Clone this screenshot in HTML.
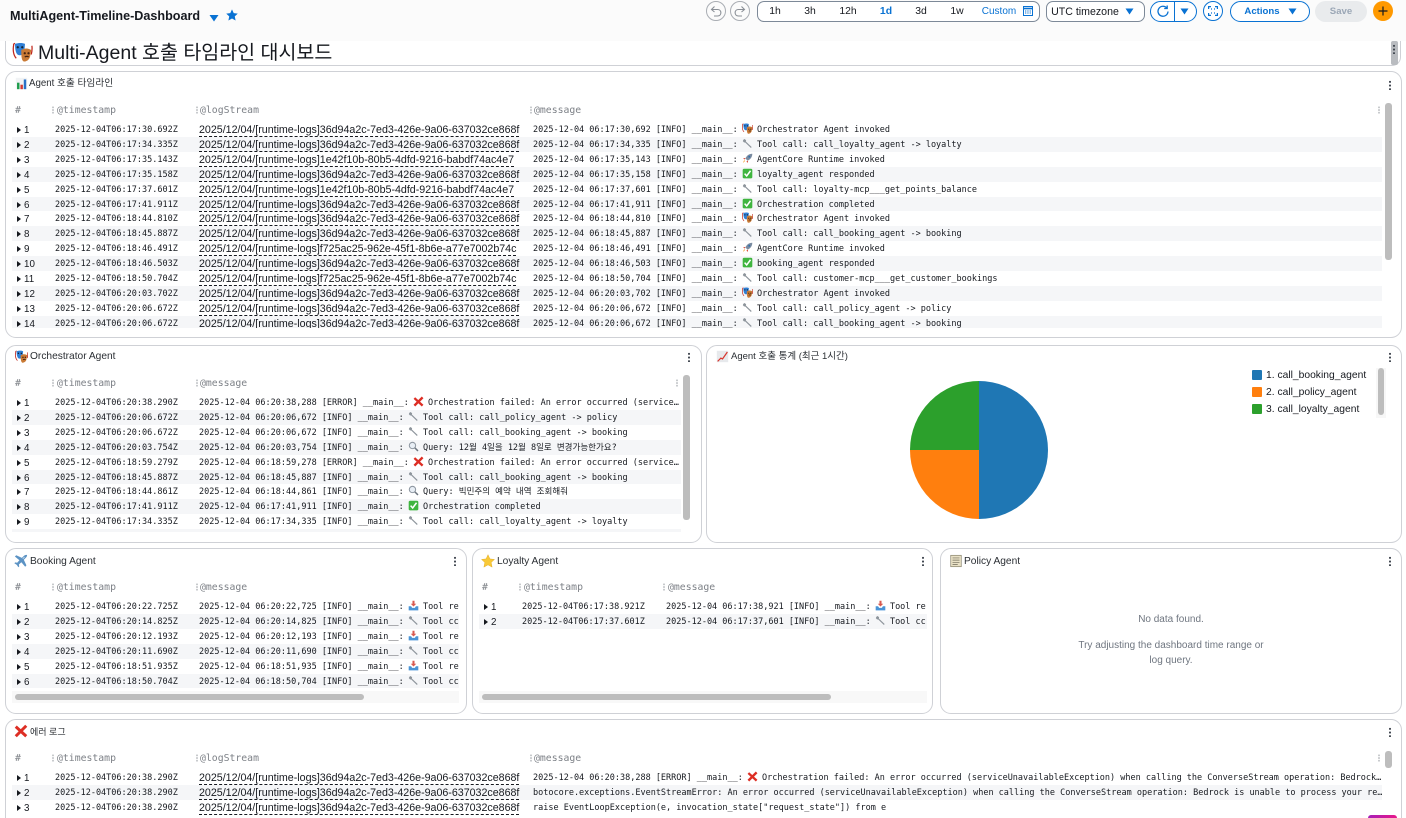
<!DOCTYPE html>
<html lang="ko">
<head>
<meta charset="utf-8">
<title>MultiAgent-Timeline-Dashboard</title>
<style>
html,body{margin:0;padding:0;background:#fff;width:1406px;height:818px;overflow:hidden}
#page{position:relative;width:1406px;height:818px;overflow:hidden;font-family:"Liberation Sans","Noto Sans CJK KR",sans-serif;color:#16191f}
.abs,.panel,.tb,.pt,.th,.sb,.dots{position:absolute}
#top{position:absolute;left:0;top:0;width:1406px;height:41px;background:#fbfbfb}
.panel{box-sizing:border-box;border:1px solid #cfd1d6;border-radius:11px;background:#fff}
.pt{font-size:10.2px;line-height:12px;color:#2a2e33;white-space:nowrap}
.pi{position:absolute;width:13px;height:13px}
.th{font:9.8px/12px "DejaVu Sans Mono",monospace;color:#7d8187;white-space:nowrap}
.sep{position:absolute;width:2px;height:8px;background-image:radial-gradient(circle,#9a9ea3 .7px,transparent .8px);background-size:2px 2.7px}
.sb{background:#bdbdbd;border-radius:3px}
.dots{width:2px;height:10px;background-image:radial-gradient(circle,#414750 1px,transparent 1.1px);background-size:2px 3.7px}
.tb{overflow:hidden}
.r{position:relative;height:14.92px;font:8.5px/14.92px "DejaVu Sans Mono","Noto Sans CJK KR",monospace;color:#16191f;white-space:nowrap}
.r:nth-child(even){background:#f5f6f8}
.r i{position:absolute;left:5px;top:5px;width:0;height:0;border-left:4px solid #16191f;border-top:3.2px solid transparent;border-bottom:3.2px solid transparent}
.r b{position:absolute;left:12px;top:1px;font:400 9.8px/15px "Liberation Sans",sans-serif}
.r .t{position:absolute;left:43px;top:1px}
.r .l{position:absolute;left:187px;top:0;font:400 10.68px/16px "Liberation Sans",sans-serif;border-bottom:1px dashed #16191f;height:14px;letter-spacing:-.01px}
.r .m{position:absolute;top:1px;overflow:hidden}
.m2{left:187px}.m3{left:521px}
.r svg{width:11px;height:11px;vertical-align:-2px;margin:0 -1px 0 -1px}
.ti{position:absolute;top:6px;font-size:10.4px;line-height:12px;white-space:nowrap;transform:translateX(-50%);color:#16191f}
.circ{position:absolute;box-sizing:border-box;width:20px;height:20px;top:1px;border-radius:50%}
.leg{position:absolute;left:1266px;font-size:10.3px;line-height:12px;color:#16191f;white-space:nowrap}
.sw{position:absolute;left:1252px;width:10px;height:10px;border-radius:1px}
.nd{position:absolute;left:940px;width:462px;text-align:center;font-size:10px;line-height:12px;color:#6f7680}
</style>
</head>
<body>
<div id="page">
<svg width="0" height="0" style="position:absolute">
<defs>
<symbol id="mask" viewBox="0 0 16 16"><path d="M0.5 2 L2 1 M1 2 C0 7 1 11 3 13" stroke="#c0271c" stroke-width="1" fill="none"/><path d="M15.5 3 C16 6 15.5 8 15 10" stroke="#c0271c" stroke-width="1" fill="none"/><path d="M2 1.5 C5 .5 8 .5 10 1.5 L9.5 7 C9 10 6.5 11 5 10.5 C3 10 2 7 2 1.5Z" fill="#2f7fd6"/><path d="M7 6.5 C10 4.5 13 5 15 6.5 L14 12 C13 15 10 16 8.8 15.5 C7 14.5 7 10 7 6.5Z" fill="#c97a35"/><circle cx="4.2" cy="4.2" r=".9" fill="#123"/><circle cx="7.8" cy="4.2" r=".9" fill="#123"/><circle cx="9.8" cy="9" r=".9" fill="#421"/><circle cx="12.8" cy="9" r=".9" fill="#421"/><path d="M9.8 12 Q11.5 11 13 12" stroke="#421" fill="none"/></symbol>
<symbol id="wr" viewBox="0 0 16 16"><path d="M2 2.5 L4 1.5 L6 3.5 L5.6 5 L14 13 L13 14.5 L4.5 6.4 L3 6.5 L1.2 4.5Z" fill="#8d949b"/></symbol>
<symbol id="ro" viewBox="0 0 16 16"><path d="M15 1 C10 1 6.5 4 5 8 L8 11 C12 9.5 15 6 15 1Z" fill="#7a8ba0"/><circle cx="10.6" cy="5.4" r="1.4" fill="#2d6fb0"/><path d="M5 7 L1.5 8 L4 9.5Z M9 11 L8 14.5 L6.5 12Z" fill="#d9412e"/><path d="M4.5 11.5 L1.5 14.5 L3 10.5Z" fill="#f39a1e"/></symbol>
<symbol id="ok" viewBox="0 0 16 16"><rect x="1" y="1" width="14" height="14" rx="2" fill="#3fb53f"/><path d="M3.8 8.2 L6.8 11.6 L12.4 4" stroke="#fff" stroke-width="2.2" fill="none"/></symbol>
<symbol id="no" viewBox="0 0 16 16"><path d="M2 3 L14 14 M14 2 L2 14" stroke="#dd2e24" stroke-width="3.4" fill="none"/></symbol>
<symbol id="se" viewBox="0 0 16 16"><circle cx="6.5" cy="6.5" r="4.6" fill="#e8eef5" stroke="#8f98a2" stroke-width="1.5"/><path d="M10 10 L14.5 14.5" stroke="#6d7680" stroke-width="2.2"/></symbol>
<symbol id="tr" viewBox="0 0 16 16"><path d="M6.5 1 H9.5 V5.5 H12 L8 9.5 L4 5.5 H6.5Z" fill="#d85a50"/><path d="M1 9 H4.5 L6 11.5 H10 L11.5 9 H15 V15 H1Z" fill="#4a94d6"/></symbol>
<symbol id="bar" viewBox="0 0 16 16"><rect x="1" y="1" width="14" height="14" fill="#f1f3f5"/><rect x="2.5" y="7" width="3" height="8" fill="#1f9d4c"/><rect x="6.7" y="9.5" width="3" height="5.5" fill="#d23a32"/><rect x="10.8" y="3" width="3" height="12" fill="#2a72c8"/></symbol>
<symbol id="line" viewBox="0 0 16 16"><rect x="1" y="1" width="14" height="14" fill="#e7e9ec"/><path d="M2 14 L6 10 L8 11 L14 2.5" stroke="#d8352d" stroke-width="1.5" fill="none"/></symbol>
<symbol id="pl" viewBox="0 0 16 16"><path d="M14.8 1.2 C13.6 .6 12.2 1.2 11 2.4 L9 4.4 L2.6 1.4 L1 2.8 L6.2 7.2 L3.6 10 L1.4 9.6 L.4 10.6 L3.2 12.4 L5 15.2 L6 14.2 L5.6 12 L8.4 9.4 L12.8 14.6 L14.2 13 L11.2 6.6 L13.2 4.6 C14.4 3.4 15.4 2.2 14.8 1.2Z" fill="#5c93c4"/><path d="M10 5.5 L12 3.5" stroke="#c7dcee" stroke-width="1"/></symbol>
<symbol id="st" viewBox="0 0 16 16"><path d="M8 .8 L10.2 5.6 L15.4 6.2 L11.6 9.7 L12.7 15 L8 12.4 L3.3 15 L4.4 9.7 L.6 6.2 L5.8 5.6Z" fill="#f8c938" stroke="#e0a820" stroke-width=".5"/></symbol>
<symbol id="me" viewBox="0 0 16 16"><rect x="2" y="1.5" width="12" height="13" fill="#e9e1c6" stroke="#86806a" stroke-width=".8"/><path d="M4 4.5 H12 M4 7 H12 M4 9.5 H12 M4 12 H10" stroke="#6f6a58" stroke-width=".8"/></symbol>
</defs>
</svg>

<div id="top"></div>
<div class="abs" style="left:10px;top:9px;font-size:12.6px;font-weight:700;line-height:15px;color:#16191f;white-space:nowrap">MultiAgent-Timeline-Dashboard</div>
<svg class="abs" style="left:209px;top:14px" width="10" height="8"><path d="M0.5 1 H9.5 L5 7.5Z" fill="#0972d3"/></svg>
<svg class="abs" style="left:226px;top:9px" width="12" height="12" viewBox="0 0 16 16"><path d="M8 .5 L10.3 5.5 L15.7 6.1 L11.7 9.8 L12.8 15.4 L8 12.6 L3.2 15.4 L4.3 9.8 L.3 6.1 L5.7 5.5Z" fill="#0972d3"/></svg>

<div class="circ" style="left:706px;border:1px solid #a9adb3"></div>
<svg class="abs" style="left:710px;top:5px" width="12" height="12" viewBox="0 0 12 12" fill="none" stroke="#8a8f96" stroke-width="1.1"><path d="M4.5 1.5 L1.5 4.5 L4.5 7 M1.5 4.5 H7.5 C12 4.5 12 11 7.5 11 H4"/></svg>
<div class="circ" style="left:730px;border:1px solid #a9adb3"></div>
<svg class="abs" style="left:734px;top:5px" width="12" height="12" viewBox="0 0 12 12" fill="none" stroke="#8a8f96" stroke-width="1.1"><path d="M7.5 1.5 L10.5 4.5 L7.5 7 M10.5 4.5 H4.5 C0 4.5 0 11 4.5 11 H8"/></svg>
<div class="abs" style="left:757px;top:1px;width:283px;height:21px;box-sizing:border-box;border:1px solid #7d8998;border-radius:7px;background:#fff"></div>
<div class="ti" style="left:775px">1h</div>
<div class="ti" style="left:810px">3h</div>
<div class="ti" style="left:848px">12h</div>
<div class="ti" style="left:886px;color:#0972d3;font-weight:700">1d</div>
<div class="ti" style="left:921px">3d</div>
<div class="ti" style="left:957px">1w</div>
<div class="ti" style="left:999px;color:#0972d3;font-size:10px">Custom</div>
<svg class="abs" style="left:1023px;top:6px" width="10" height="10" viewBox="0 0 10 10"><rect x=".5" y=".5" width="9" height="9" fill="none" stroke="#0972d3"/><path d="M.5 2.5 H9.5" stroke="#0972d3" stroke-width="1.6"/><path d="M2 5 H8 M2 7 H8" stroke="#0972d3" stroke-dasharray="1 .7"/></svg>
<div class="abs" style="left:1046px;top:1px;width:99px;height:21px;box-sizing:border-box;border:1px solid #7d8998;border-radius:7px;background:#fff"></div>
<div class="ti" style="left:1085px;font-size:10.6px">UTC timezone</div>
<svg class="abs" style="left:1125px;top:8px" width="9" height="7"><path d="M.5 .5 H8.5 L4.5 6.5Z" fill="#0972d3"/></svg>
<div class="abs" style="left:1150px;top:1px;width:47px;height:21px;box-sizing:border-box;border:1px solid #0972d3;border-radius:11px;background:#fff"></div>
<div class="abs" style="left:1174px;top:1px;width:1px;height:21px;background:#0972d3"></div>
<svg class="abs" style="left:1157px;top:5px" width="12" height="12" viewBox="0 0 12 12" fill="none" stroke="#0972d3" stroke-width="1.3"><path d="M9.8 3 A5 5 0 1 0 11 6.5"/><path d="M10.2 .5 V3.5 H7.2"/></svg>
<svg class="abs" style="left:1180px;top:8px" width="9" height="7"><path d="M.5 .5 H8.5 L4.5 6.5Z" fill="#0972d3"/></svg>
<div class="circ" style="left:1203px;border:1px solid #0972d3;background:#fff"></div>
<svg class="abs" style="left:1208px;top:6px" width="10" height="10" viewBox="0 0 10 10" fill="none" stroke="#0972d3" stroke-width="1.2"><path d="M.6 3 V.6 H3 M7 .6 H9.4 V3 M9.4 7 V9.4 H7 M3 9.4 H.6 V7"/><path d="M3 3 H4 M6 3 H7 M3 7 H4 M6 7 H7"/></svg>
<div class="abs" style="left:1230px;top:1px;width:80px;height:21px;box-sizing:border-box;border:1px solid #0972d3;border-radius:11px;background:#fff"></div>
<div class="ti" style="left:1262px;color:#0972d3;font-weight:700;font-size:9.6px">Actions</div>
<svg class="abs" style="left:1288px;top:8px" width="9" height="7"><path d="M.5 .5 H8.5 L4.5 6.5Z" fill="#0972d3"/></svg>
<div class="abs" style="left:1315px;top:1px;width:52px;height:21px;border-radius:11px;background:#e9ebed"></div>
<div class="ti" style="left:1341px;color:#9ba7b6;font-weight:700;font-size:9.6px">Save</div>
<div class="circ" style="left:1373px;background:#ff9900"></div>
<svg class="abs" style="left:1378px;top:6px" width="10" height="10"><path d="M5 .5 V9.5 M.5 5 H9.5" stroke="#16191f" stroke-width="1.2"/></svg>

<!-- Title panel -->
<div class="abs" style="left:5px;top:41px;width:1396px;height:25px;box-sizing:border-box;border:1px solid #cfd1d6;border-top:0;border-radius:0 0 9px 9px;background:#fff"></div>
<svg class="abs" style="left:12px;top:42px;width:21px;height:20px"><use href="#mask"/></svg>
<div class="abs" style="left:38px;top:41px;font-size:19.5px;line-height:24px;color:#16191f;white-space:nowrap">Multi-Agent 호출 타임라인 대시보드</div>
<div class="abs" style="left:1391px;top:41px;width:7px;height:24px;background:#b9bcc0;border-radius:2px"></div>
<div class="dots" style="left:1393px;top:44px"></div>

<!-- Panel 1 -->
<div class="panel" style="left:5px;top:71px;width:1397px;height:267px"></div>
<svg class="pi" style="left:15px;top:77px"><use href="#bar"/></svg>
<div class="pt" style="left:29px;top:78px;font-size:9.7px">Agent 호출 타임라인</div>
<div class="dots" style="left:1389px;top:80px"></div>
<div class="th" style="left:15px;top:105px">#</div>
<div class="sep" style="left:52px;top:106px"></div><div class="th" style="left:57px;top:105px">@timestamp</div>
<div class="sep" style="left:196px;top:106px"></div><div class="th" style="left:200px;top:105px">@logStream</div>
<div class="sep" style="left:530px;top:106px"></div><div class="th" style="left:534px;top:105px">@message</div>
<div class="sep" style="left:1378px;top:106px"></div>
<div class="sb" style="left:1385px;top:103px;width:7px;height:157px"></div>
<div class="tb" style="left:12px;top:122px;width:1370px;height:206px">
<div class="r"><i></i><b>1</b><span class="t">2025-12-04T06:17:30.692Z</span><span class="l">2025/12/04/[runtime-logs]36d94a2c-7ed3-426e-9a06-637032ce868f</span><span class="m m3">2025-12-04 06:17:30,692 [INFO] __main__: <svg><use href="#mask"/></svg> Orchestrator Agent invoked</span></div>
<div class="r"><i></i><b>2</b><span class="t">2025-12-04T06:17:34.335Z</span><span class="l">2025/12/04/[runtime-logs]36d94a2c-7ed3-426e-9a06-637032ce868f</span><span class="m m3">2025-12-04 06:17:34,335 [INFO] __main__: <svg><use href="#wr"/></svg> Tool call: call_loyalty_agent -&gt; loyalty</span></div>
<div class="r"><i></i><b>3</b><span class="t">2025-12-04T06:17:35.143Z</span><span class="l">2025/12/04/[runtime-logs]1e42f10b-80b5-4dfd-9216-babdf74ac4e7</span><span class="m m3">2025-12-04 06:17:35,143 [INFO] __main__: <svg><use href="#ro"/></svg> AgentCore Runtime invoked</span></div>
<div class="r"><i></i><b>4</b><span class="t">2025-12-04T06:17:35.158Z</span><span class="l">2025/12/04/[runtime-logs]36d94a2c-7ed3-426e-9a06-637032ce868f</span><span class="m m3">2025-12-04 06:17:35,158 [INFO] __main__: <svg><use href="#ok"/></svg> loyalty_agent responded</span></div>
<div class="r"><i></i><b>5</b><span class="t">2025-12-04T06:17:37.601Z</span><span class="l">2025/12/04/[runtime-logs]1e42f10b-80b5-4dfd-9216-babdf74ac4e7</span><span class="m m3">2025-12-04 06:17:37,601 [INFO] __main__: <svg><use href="#wr"/></svg> Tool call: loyalty-mcp___get_points_balance</span></div>
<div class="r"><i></i><b>6</b><span class="t">2025-12-04T06:17:41.911Z</span><span class="l">2025/12/04/[runtime-logs]36d94a2c-7ed3-426e-9a06-637032ce868f</span><span class="m m3">2025-12-04 06:17:41,911 [INFO] __main__: <svg><use href="#ok"/></svg> Orchestration completed</span></div>
<div class="r"><i></i><b>7</b><span class="t">2025-12-04T06:18:44.810Z</span><span class="l">2025/12/04/[runtime-logs]36d94a2c-7ed3-426e-9a06-637032ce868f</span><span class="m m3">2025-12-04 06:18:44,810 [INFO] __main__: <svg><use href="#mask"/></svg> Orchestrator Agent invoked</span></div>
<div class="r"><i></i><b>8</b><span class="t">2025-12-04T06:18:45.887Z</span><span class="l">2025/12/04/[runtime-logs]36d94a2c-7ed3-426e-9a06-637032ce868f</span><span class="m m3">2025-12-04 06:18:45,887 [INFO] __main__: <svg><use href="#wr"/></svg> Tool call: call_booking_agent -&gt; booking</span></div>
<div class="r"><i></i><b>9</b><span class="t">2025-12-04T06:18:46.491Z</span><span class="l">2025/12/04/[runtime-logs]f725ac25-962e-45f1-8b6e-a77e7002b74c</span><span class="m m3">2025-12-04 06:18:46,491 [INFO] __main__: <svg><use href="#ro"/></svg> AgentCore Runtime invoked</span></div>
<div class="r"><i></i><b>10</b><span class="t">2025-12-04T06:18:46.503Z</span><span class="l">2025/12/04/[runtime-logs]36d94a2c-7ed3-426e-9a06-637032ce868f</span><span class="m m3">2025-12-04 06:18:46,503 [INFO] __main__: <svg><use href="#ok"/></svg> booking_agent responded</span></div>
<div class="r"><i></i><b>11</b><span class="t">2025-12-04T06:18:50.704Z</span><span class="l">2025/12/04/[runtime-logs]f725ac25-962e-45f1-8b6e-a77e7002b74c</span><span class="m m3">2025-12-04 06:18:50,704 [INFO] __main__: <svg><use href="#wr"/></svg> Tool call: customer-mcp___get_customer_bookings</span></div>
<div class="r"><i></i><b>12</b><span class="t">2025-12-04T06:20:03.702Z</span><span class="l">2025/12/04/[runtime-logs]36d94a2c-7ed3-426e-9a06-637032ce868f</span><span class="m m3">2025-12-04 06:20:03,702 [INFO] __main__: <svg><use href="#mask"/></svg> Orchestrator Agent invoked</span></div>
<div class="r"><i></i><b>13</b><span class="t">2025-12-04T06:20:06.672Z</span><span class="l">2025/12/04/[runtime-logs]36d94a2c-7ed3-426e-9a06-637032ce868f</span><span class="m m3">2025-12-04 06:20:06,672 [INFO] __main__: <svg><use href="#wr"/></svg> Tool call: call_policy_agent -&gt; policy</span></div>
<div class="r"><i></i><b>14</b><span class="t">2025-12-04T06:20:06.672Z</span><span class="l">2025/12/04/[runtime-logs]36d94a2c-7ed3-426e-9a06-637032ce868f</span><span class="m m3">2025-12-04 06:20:06,672 [INFO] __main__: <svg><use href="#wr"/></svg> Tool call: call_booking_agent -&gt; booking</span></div>
</div>

<!-- Panel 2 -->
<div class="panel" style="left:5px;top:345px;width:697px;height:198px"></div>
<svg class="pi" style="left:15px;top:350px"><use href="#mask"/></svg>
<div class="pt" style="left:30px;top:351px">Orchestrator Agent</div>
<div class="dots" style="left:688px;top:352px"></div>
<div class="th" style="left:15px;top:378px">#</div>
<div class="sep" style="left:52px;top:379px"></div><div class="th" style="left:57px;top:378px">@timestamp</div>
<div class="sep" style="left:196px;top:379px"></div><div class="th" style="left:200px;top:378px">@message</div>
<div class="sep" style="left:676px;top:379px"></div>
<div class="sb" style="left:683px;top:375px;width:7px;height:145px"></div>
<div class="tb" style="left:12px;top:395px;width:669px;height:137px">
<div class="r"><i></i><b>1</b><span class="t">2025-12-04T06:20:38.290Z</span><span class="m m2">2025-12-04 06:20:38,288 [ERROR] __main__: <svg><use href="#no"/></svg> Orchestration failed: An error occurred (service…</span></div>
<div class="r"><i></i><b>2</b><span class="t">2025-12-04T06:20:06.672Z</span><span class="m m2">2025-12-04 06:20:06,672 [INFO] __main__: <svg><use href="#wr"/></svg> Tool call: call_policy_agent -&gt; policy</span></div>
<div class="r"><i></i><b>3</b><span class="t">2025-12-04T06:20:06.672Z</span><span class="m m2">2025-12-04 06:20:06,672 [INFO] __main__: <svg><use href="#wr"/></svg> Tool call: call_booking_agent -&gt; booking</span></div>
<div class="r"><i></i><b>4</b><span class="t">2025-12-04T06:20:03.754Z</span><span class="m m2">2025-12-04 06:20:03,754 [INFO] __main__: <svg><use href="#se"/></svg> Query: 12월 4일을 12월 8일로 변경가능한가요?</span></div>
<div class="r"><i></i><b>5</b><span class="t">2025-12-04T06:18:59.279Z</span><span class="m m2">2025-12-04 06:18:59,278 [ERROR] __main__: <svg><use href="#no"/></svg> Orchestration failed: An error occurred (service…</span></div>
<div class="r"><i></i><b>6</b><span class="t">2025-12-04T06:18:45.887Z</span><span class="m m2">2025-12-04 06:18:45,887 [INFO] __main__: <svg><use href="#wr"/></svg> Tool call: call_booking_agent -&gt; booking</span></div>
<div class="r"><i></i><b>7</b><span class="t">2025-12-04T06:18:44.861Z</span><span class="m m2">2025-12-04 06:18:44,861 [INFO] __main__: <svg><use href="#se"/></svg> Query: 빅민주의 예약 내역 조회해줘</span></div>
<div class="r"><i></i><b>8</b><span class="t">2025-12-04T06:17:41.911Z</span><span class="m m2">2025-12-04 06:17:41,911 [INFO] __main__: <svg><use href="#ok"/></svg> Orchestration completed</span></div>
<div class="r"><i></i><b>9</b><span class="t">2025-12-04T06:17:34.335Z</span><span class="m m2">2025-12-04 06:17:34,335 [INFO] __main__: <svg><use href="#wr"/></svg> Tool call: call_loyalty_agent -&gt; loyalty</span></div>
<div class="r"></div>
</div>

<!-- Panel 3 -->
<div class="panel" style="left:706px;top:345px;width:696px;height:198px"></div>
<svg class="pi" style="left:716px;top:350px"><use href="#line"/></svg>
<div class="pt" style="left:731px;top:351px;font-size:9.5px">Agent 호출 통계 (최근 1시간)</div>
<div class="dots" style="left:1389px;top:352px"></div>
<svg class="abs" style="left:905px;top:376px" width="148" height="148" viewBox="-74 -74 148 148">
<path d="M0 -69 A69 69 0 0 1 0 69Z" fill="#1f77b4"/>
<path d="M0 0 V69 A69 69 0 0 1 -69 0Z" fill="#ff7f0e"/>
<path d="M0 0 H-69 A69 69 0 0 1 0 -69Z" fill="#2ca02c"/>
</svg>
<div class="sw" style="left:1252px;top:370px;background:#1f77b4"></div><div class="leg" style="top:370px">1. call_booking_agent</div>
<div class="sw" style="top:387px;background:#ff7f0e"></div><div class="leg" style="top:387px">2. call_policy_agent</div>
<div class="sw" style="top:404px;background:#2ca02c"></div><div class="leg" style="top:404px">3. call_loyalty_agent</div>
<div class="abs" style="left:1376px;top:368px;width:10px;height:50px;background:#f7f7f7"></div>
<div class="sb" style="left:1378px;top:368px;width:6px;height:47px"></div>

<!-- Panel 4 -->
<div class="panel" style="left:5px;top:548px;width:462px;height:166px"></div>
<svg class="pi" style="left:14px;top:554px;width:14px;height:14px"><use href="#pl"/></svg>
<div class="pt" style="left:30px;top:556px">Booking Agent</div>
<div class="dots" style="left:454px;top:556px"></div>
<div class="th" style="left:15px;top:582px">#</div>
<div class="sep" style="left:52px;top:583px"></div><div class="th" style="left:57px;top:582px">@timestamp</div>
<div class="sep" style="left:196px;top:583px"></div><div class="th" style="left:200px;top:582px">@message</div>
<div class="tb" style="left:12px;top:599px;width:447px;height:90px">
<div class="r"><i></i><b>1</b><span class="t">2025-12-04T06:20:22.725Z</span><span class="m m2">2025-12-04 06:20:22,725 [INFO] __main__: <svg><use href="#tr"/></svg> Tool re</span></div>
<div class="r"><i></i><b>2</b><span class="t">2025-12-04T06:20:14.825Z</span><span class="m m2">2025-12-04 06:20:14,825 [INFO] __main__: <svg><use href="#wr"/></svg> Tool cc</span></div>
<div class="r"><i></i><b>3</b><span class="t">2025-12-04T06:20:12.193Z</span><span class="m m2">2025-12-04 06:20:12,193 [INFO] __main__: <svg><use href="#tr"/></svg> Tool re</span></div>
<div class="r"><i></i><b>4</b><span class="t">2025-12-04T06:20:11.690Z</span><span class="m m2">2025-12-04 06:20:11,690 [INFO] __main__: <svg><use href="#wr"/></svg> Tool cc</span></div>
<div class="r"><i></i><b>5</b><span class="t">2025-12-04T06:18:51.935Z</span><span class="m m2">2025-12-04 06:18:51,935 [INFO] __main__: <svg><use href="#tr"/></svg> Tool re</span></div>
<div class="r"><i></i><b>6</b><span class="t">2025-12-04T06:18:50.704Z</span><span class="m m2">2025-12-04 06:18:50,704 [INFO] __main__: <svg><use href="#wr"/></svg> Tool cc</span></div>
</div>
<div class="abs" style="left:12px;top:691px;width:447px;height:12px;background:#f8f8f8"></div>
<div class="sb" style="left:15px;top:694px;width:349px;height:6px"></div>

<!-- Panel 5 -->
<div class="panel" style="left:472px;top:548px;width:461px;height:166px"></div>
<svg class="pi" style="left:481px;top:554px;width:14px;height:14px"><use href="#st"/></svg>
<div class="pt" style="left:497px;top:556px">Loyalty Agent</div>
<div class="dots" style="left:922px;top:556px"></div>
<div class="th" style="left:482px;top:582px">#</div>
<div class="sep" style="left:519px;top:583px"></div><div class="th" style="left:524px;top:582px">@timestamp</div>
<div class="sep" style="left:663px;top:583px"></div><div class="th" style="left:668px;top:582px">@message</div>
<div class="tb" style="left:479px;top:599px;width:448px;height:90px">
<div class="r"><i></i><b>1</b><span class="t">2025-12-04T06:17:38.921Z</span><span class="m m2">2025-12-04 06:17:38,921 [INFO] __main__: <svg><use href="#tr"/></svg> Tool re</span></div>
<div class="r"><i></i><b>2</b><span class="t">2025-12-04T06:17:37.601Z</span><span class="m m2">2025-12-04 06:17:37,601 [INFO] __main__: <svg><use href="#wr"/></svg> Tool cc</span></div>
</div>
<div class="abs" style="left:479px;top:691px;width:448px;height:12px;background:#f8f8f8"></div>
<div class="sb" style="left:482px;top:694px;width:349px;height:6px"></div>

<!-- Panel 6 -->
<div class="panel" style="left:940px;top:548px;width:462px;height:166px"></div>
<svg class="pi" style="left:949px;top:554px;width:14px;height:14px"><use href="#me"/></svg>
<div class="pt" style="left:964px;top:556px">Policy Agent</div>
<div class="dots" style="left:1389px;top:556px"></div>
<div class="nd" style="top:614px">No data found.</div>
<div class="nd" style="top:640px">Try adjusting the dashboard time range or</div>
<div class="nd" style="top:655px">log query.</div>

<!-- Panel 7 -->
<div class="panel" style="left:5px;top:719px;width:1397px;height:130px"></div>
<svg class="pi" style="left:14px;top:724px;width:14px;height:14px"><use href="#no"/></svg>
<div class="pt" style="left:30px;top:726px;font-size:9px">에러 로그</div>
<div class="dots" style="left:1389px;top:727px"></div>
<div class="th" style="left:15px;top:753px">#</div>
<div class="sep" style="left:52px;top:754px"></div><div class="th" style="left:57px;top:753px">@timestamp</div>
<div class="sep" style="left:196px;top:754px"></div><div class="th" style="left:200px;top:753px">@logStream</div>
<div class="sep" style="left:530px;top:754px"></div><div class="th" style="left:534px;top:753px">@message</div>
<div class="sep" style="left:1378px;top:754px"></div>
<div class="sb" style="left:1385px;top:751px;width:7px;height:17px"></div>
<div class="tb" style="left:12px;top:770px;width:1370px;height:48px">
<div class="r"><i></i><b>1</b><span class="t">2025-12-04T06:20:38.290Z</span><span class="l">2025/12/04/[runtime-logs]36d94a2c-7ed3-426e-9a06-637032ce868f</span><span class="m m3">2025-12-04 06:20:38,288 [ERROR] __main__: <svg><use href="#no"/></svg> Orchestration failed: An error occurred (serviceUnavailableException) when calling the ConverseStream operation: Bedrock…</span></div>
<div class="r"><i></i><b>2</b><span class="t">2025-12-04T06:20:38.290Z</span><span class="l">2025/12/04/[runtime-logs]36d94a2c-7ed3-426e-9a06-637032ce868f</span><span class="m m3">botocore.exceptions.EventStreamError: An error occurred (serviceUnavailableException) when calling the ConverseStream operation: Bedrock is unable to process your re…</span></div>
<div class="r"><i></i><b>3</b><span class="t">2025-12-04T06:20:38.290Z</span><span class="l">2025/12/04/[runtime-logs]36d94a2c-7ed3-426e-9a06-637032ce868f</span><span class="m m3">raise EventLoopException(e, invocation_state["request_state"]) from e</span></div>
</div>
<div class="abs" style="left:1368px;top:815px;width:29px;height:3px;border-radius:3px 3px 0 0;background:linear-gradient(90deg,#a51fb8,#e8178a)"></div>
</div>
</body>
</html>
